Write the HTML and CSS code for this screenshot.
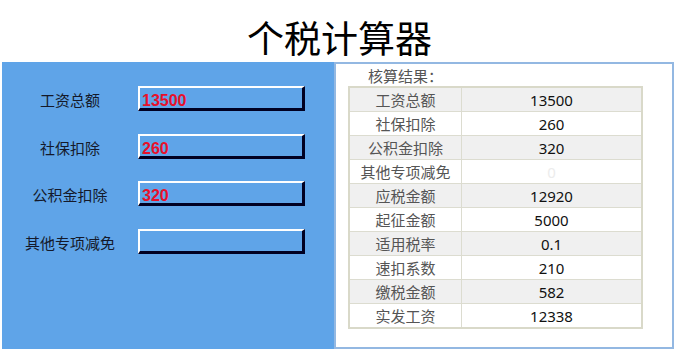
FILE: index.html
```html
<!DOCTYPE html>
<html lang="zh">
<head>
<meta charset="utf-8">
<link rel="stylesheet" href="styles.css">
</head>
<body>
<h1 class="title">个税计算器</h1>
<div class="main">
  <div class="form-panel">
    <div class="label">工资总额</div><div class="field">13500</div>
    <div class="label">社保扣除</div><div class="field">260</div>
    <div class="label">公积金扣除</div><div class="field">320</div>
    <div class="label">其他专项减免</div><div class="field"></div>
  </div>
  <div class="result-panel">
    <div class="result-title">核算结果：</div>
    <table class="result">
      <tr><th>工资总额</th><td>13500</td></tr>
      <tr><th>社保扣除</th><td>260</td></tr>
      <tr><th>公积金扣除</th><td>320</td></tr>
      <tr><th>其他专项减免</th><td class="faint">0</td></tr>
      <tr><th>应税金额</th><td>12920</td></tr>
      <tr><th>起征金额</th><td>5000</td></tr>
      <tr><th>适用税率</th><td>0.1</td></tr>
      <tr><th>速扣系数</th><td>210</td></tr>
      <tr><th>缴税金额</th><td>582</td></tr>
      <tr><th>实发工资</th><td>12338</td></tr>
    </table>
  </div>
</div>
</body>
</html>
```
FILE: styles.css
```css
html, body {
  margin: 0;
  padding: 0;
  background: #ffffff;
  font-family: "Noto Sans CJK SC", "Noto Sans", sans-serif;
}
.title {
  margin: 0;
  height: 62px;
  line-height: 74px;
  text-align: center;
  font-size: 37px;
  font-weight: 400;
  color: #000;
}
.main {
  display: flex;
  padding-left: 2px;
  height: 287px;
}
.form-panel {
  width: 332px;
  background: #5fa4e8;
  display: grid;
  grid-template-columns: 136px 167px;
  grid-auto-rows: 25px;
  row-gap: 22.5px;
  padding-top: 24px;
  align-content: start;
  box-sizing: border-box;
}
.label {
  text-align: center;
  font-size: 15px;
  line-height: 24px;
  color: #14192a;
  padding-top: 2px;
}
.field {
  box-sizing: border-box;
  border-top: 2px solid #ffffff;
  border-left: 2px solid #ffffff;
  border-right: 3px solid #000022;
  border-bottom: 3px solid #000022;
  font-family: "Liberation Sans", Arial, sans-serif;
  font-weight: bold;
  font-size: 16px;
  color: #e8102a;
  line-height: 20px;
  padding-left: 2px;
  padding-top: 3px;
}
.result-panel {
  width: 340px;
  border: 2px solid #93b8e2;
  box-sizing: border-box;
  background: #fff;
  padding-left: 12px;
}
.result-title {
  font-size: 15px;
  color: #555;
  line-height: 20px;
  padding-left: 20px;
  padding-top: 2px;
}
.result {
  border-collapse: collapse;
  border: 2px solid #d9d9c9;
  margin-top: 0;
}
.result th, .result td {
  border: 1px solid #dcdcd0;
  height: 23px;
  padding: 0;
  font-size: 15px;
  line-height: 22px;
  font-weight: 400;
  text-align: center;
}
.result th {
  width: 111px;
  color: #555;
}
.result td {
  width: 179px;
  color: #111;
  font-family: "Noto Sans", sans-serif;
}
.result tr:nth-child(odd) {
  background: #f0f0f0;
}
.result td.faint {
  color: #ececec;
}
```
